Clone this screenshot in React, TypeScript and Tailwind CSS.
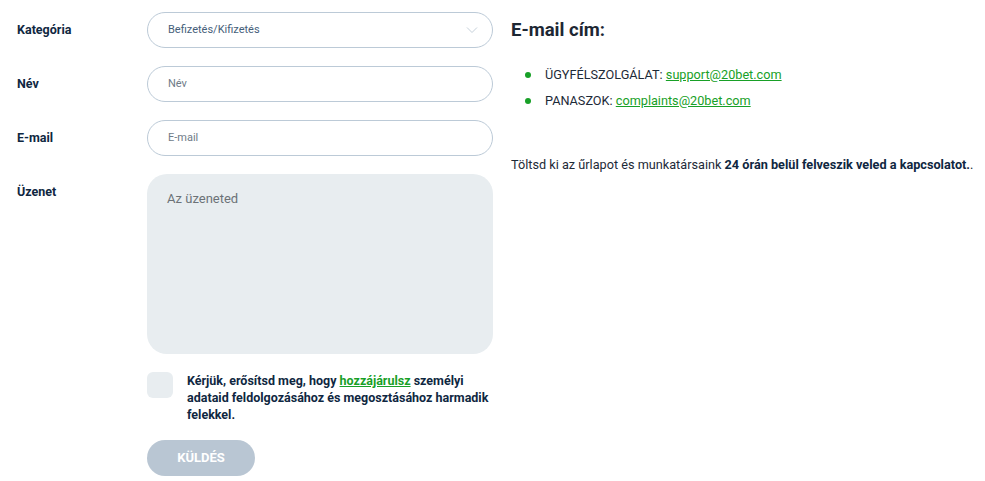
import React from "react";

const font = { fontFamily: "Roboto, 'Liberation Sans', sans-serif" };

function Row({ label, children }: { label: string; children: React.ReactNode }) {
  return (
    <div className="flex">
      <div className="w-[130px] shrink-0 h-[36px] flex items-center text-[12.5px] font-bold text-[#0f2741]">{label}</div>
      <div className="flex-1">{children}</div>
    </div>
  );
}

export default function App() {
  return (
    <div style={font} className="w-[985px] h-[481px] bg-white flex pl-[17px] pt-[12px]">
      <div className="w-[476px] shrink-0 flex flex-col gap-[18px]">
        <Row label="Kategória">
          <div className="h-[36px] rounded-full border border-[#bccad7] flex items-center justify-between pl-[20px] pr-[14px]">
            <span className="text-[11px] text-[#46607a]">Befizetés/Kifizetés</span>
            <svg width="12" height="8" viewBox="0 0 12 8" fill="none">
              <path d="M1 1.5L6 6.5L11 1.5" stroke="#c5d0da" strokeWidth="1" />
            </svg>
          </div>
        </Row>
        <Row label="Név">
          <div className="h-[36px] rounded-full border border-[#bccad7] flex items-center pl-[20px]">
            <span className="text-[11px] text-[#6f7b88]">Név</span>
          </div>
        </Row>
        <Row label="E-mail">
          <div className="h-[36px] rounded-full border border-[#bccad7] flex items-center pl-[20px]">
            <span className="text-[11px] text-[#6f7b88]">E-mail</span>
          </div>
        </Row>
        <Row label="Üzenet">
          <div className="h-[180px] rounded-[20px] bg-[#e8edf0] pl-[20px] pt-[12px]">
            <span className="text-[13px] text-[#6c7277]">Az üzeneted</span>
          </div>
        </Row>
        <div className="flex pl-[130px]">
          <div className="w-[26px] h-[26px] rounded-[6px] bg-[#e8edf0] shrink-0" />
          <p className="ml-[14px] text-[12.5px] leading-[17px] font-bold text-[#0f2741]">
            Kérjük, erősítsd meg, hogy{" "}
            <span className="text-[#18a027] underline">hozzájárulsz</span> személyi adataid feldolgozásához és
            megosztásához harmadik felekkel.
          </p>
        </div>
        <div className="pl-[130px] -mt-[1px]">
          <div className="w-[108px] h-[36px] rounded-full bg-[#b9c6d3] flex items-center justify-center text-[13px] font-bold text-white">
            KÜLDÉS
          </div>
        </div>
      </div>
      <div className="ml-[18px] flex flex-col min-w-0 flex-1">
        <h2 className="text-[18.5px] font-bold text-[#1d2733] leading-[24px] mt-[6px]">E-mail cím:</h2>
        <ul className="mt-[24px] flex flex-col gap-[9px] pl-[14px]">
          <li className="flex items-center text-[12.7px] leading-[17px] text-[#1d2a38]">
            <span className="w-[6px] h-[6px] rounded-full bg-[#18a027] mr-[14px]" />
            ÜGYFÉLSZOLGÁLAT:&nbsp;<span className="text-[#18a027] underline">support@20bet.com</span>
          </li>
          <li className="flex items-center text-[12.7px] leading-[17px] text-[#1d2a38]">
            <span className="w-[6px] h-[6px] rounded-full bg-[#18a027] mr-[14px]" />
            PANASZOK:&nbsp;<span className="text-[#18a027] underline">complaints@20bet.com</span>
          </li>
        </ul>
        <p className="mt-[47px] text-[12.7px] leading-[17px] text-[#1d2a38] whitespace-nowrap">
          Töltsd ki az űrlapot és munkatársaink{" "}
          <b className="text-[#0f2741]">24 órán belül felveszik veled a kapcsolatot.</b>.
        </p>
      </div>
    </div>
  );
}
